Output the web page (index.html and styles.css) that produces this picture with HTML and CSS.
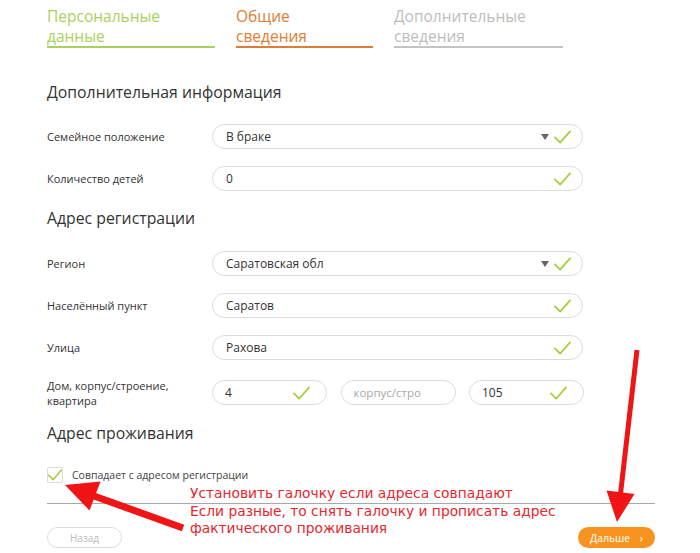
FILE: index.html
```html
<!DOCTYPE html>
<html lang="ru">
<head>
<meta charset="utf-8">
<link rel="stylesheet" href="styles.css">
</head>
<body>
<div class="page">
  <nav class="steps">
    <div class="step done">Персональные<br>данные</div>
    <div class="step current">Общие<br>сведения</div>
    <div class="step todo">Дополнительные<br>сведения</div>
  </nav>

  <main class="form">
    <h2 class="section-title first">Дополнительная информация</h2>
    <div class="row">
      <span class="label">Семейное положение</span>
      <div class="field"><span class="value">В браке</span><span class="caret"></span><svg class="check" viewBox="0 0 18 14"><path d="M1 7.5 L6.5 13 L17 1"/></svg></div>
    </div>
    <div class="row">
      <span class="label">Количество детей</span>
      <div class="field"><span class="value">0</span><svg class="check" viewBox="0 0 18 14"><path d="M1 7.5 L6.5 13 L17 1"/></svg></div>
    </div>

    <h2 class="section-title">Адрес регистрации</h2>
    <div class="row">
      <span class="label">Регион</span>
      <div class="field"><span class="value">Саратовская обл</span><span class="caret"></span><svg class="check" viewBox="0 0 18 14"><path d="M1 7.5 L6.5 13 L17 1"/></svg></div>
    </div>
    <div class="row">
      <span class="label">Населённый пункт</span>
      <div class="field"><span class="value">Саратов</span><svg class="check" viewBox="0 0 18 14"><path d="M1 7.5 L6.5 13 L17 1"/></svg></div>
    </div>
    <div class="row">
      <span class="label">Улица</span>
      <div class="field"><span class="value">Рахова</span><svg class="check" viewBox="0 0 18 14"><path d="M1 7.5 L6.5 13 L17 1"/></svg></div>
    </div>
    <div class="row house">
      <span class="label two">Дом, корпус/строение,<br>квартира</span>
      <div class="split">
        <div class="field small"><span class="value">4</span><svg class="check" viewBox="0 0 18 14"><path d="M1 7.5 L6.5 13 L17 1"/></svg></div>
        <div class="field small placeholder"><span class="value">корпус/строение</span></div>
        <div class="field small"><span class="value">105</span><svg class="check" viewBox="0 0 18 14"><path d="M1 7.5 L6.5 13 L17 1"/></svg></div>
      </div>
    </div>

    <h2 class="section-title last">Адрес проживания</h2>
    <label class="checkbox">
      <span class="box"><svg class="check" viewBox="0 0 18 14"><path d="M1 7.5 L6.5 13 L17 1"/></svg></span>
      <span class="cb-text">Совпадает с адресом регистрации</span>
    </label>

    <div class="divider"></div>

    <div class="actions">
      <button class="btn back">Назад</button>
      <button class="btn next">Дальше <span class="arr">›</span></button>
    </div>
  </main>

  <div class="note">Установить галочку если адреса совпадают<br>Если разные, то снять галочку и прописать адрес<br>фактического проживания</div>

  <svg class="arrows" viewBox="0 0 700 553" width="700" height="553">
    <line x1="183" y1="528" x2="94" y2="496" stroke="#f01414" stroke-width="7"/>
    <polygon points="65,485 100.5,481.5 89.5,510.5" fill="#f01414"/>
    <line x1="637" y1="350" x2="620.5" y2="494" stroke="#f01414" stroke-width="5"/>
    <polygon points="617,522 634.5,494 606.5,490.5" fill="#f01414"/>
  </svg>
</div>
</body>
</html>
```

FILE: styles.css
```css
* { box-sizing: border-box; }
html, body { margin: 0; padding: 0; background: #fff; }
body { font-family: "Open Sans", "Noto Sans", sans-serif; color: #333; }

.page {
  position: relative;
  width: 700px;
  height: 553px;
  overflow: hidden;
  padding-left: 47px;
}

.steps {
  display: flex;
  gap: 21px;
  padding-top: 6px;
}
.step {
  font-size: 15.5px;
  line-height: 20px;
  border-bottom: 2px solid;
  font-family: "Open Sans", sans-serif;
}
.step.done { width: 168px; color: #a9d15b; border-color: #a9d15b; }
.step.current { width: 137px; color: #e07c33; border-color: #e07c33; }
.step.todo { width: 169px; color: #bdbdbd; border-color: #c4c4c4; }

.form {
  width: 608px;
  padding-top: 17px;
}

.section-title {
  font-family: "Open Sans", sans-serif;
  font-weight: 400;
  font-size: 15.8px;
  line-height: 24px;
  color: #333;
  margin: 15px 0 21px;
}
.section-title.first { margin-bottom: 20px; }
.section-title.last { margin-top: 16px; margin-bottom: 21px; }

.row {
  display: flex;
  align-items: center;
  height: 25px;
  margin-bottom: 17px;
}
.row.house { margin-top: 20px; margin-bottom: 0; }
.row:has(+ .section-title) { margin-bottom: 0; }

.label {
  flex: none;
  width: 165px;
  font-size: 11px;
  color: #333;
  font-family: "Open Sans", sans-serif;
}
.label.two { line-height: 15px; }

.field {
  width: 371px;
  height: 25px;
  border: 1px solid #dcdcdc;
  border-radius: 13px;
  display: flex;
  align-items: center;
  padding: 0 11px 0 13px;
  background: #fff;
}
.value {
  flex: 1;
  font-family: "Open Sans", sans-serif;
  font-size: 12px;
  color: #333;
  white-space: nowrap;
  overflow: hidden;
}
.caret {
  width: 0; height: 0;
  border-left: 4.5px solid transparent;
  border-right: 4.5px solid transparent;
  border-top: 6px solid #666;
  margin-right: 5px;
}
.check {
  width: 17px;
  height: 14px;
  flex: none;
}
.check path {
  fill: none;
  stroke: #a6ce39;
  stroke-width: 1.8;
  stroke-linecap: round;
  stroke-linejoin: round;
}

.split { display: flex; gap: 13.5px; }
.field.small { width: 115px; padding: 0 16px 0 12px; }
.field.placeholder { padding-right: 34px; }
.field.placeholder .value { color: #a8a8a8; font-size: 11.5px; }

.checkbox {
  display: flex;
  align-items: center;
  gap: 9px;
  height: 17px;
}
.box {
  width: 16px; height: 16px;
  border: 1px solid #ddd;
  border-radius: 2px;
  display: flex;
  align-items: center;
  justify-content: center;
}
.box .check { width: 14px; height: 12px; }
.box .check path { stroke-width: 2; }
.cb-text {
  font-family: "Open Sans", sans-serif;
  font-size: 10.5px;
  color: #444;
}

.divider {
  margin-top: 20px;
  height: 0;
  border-top: 1.5px solid #a8a8a8;
}

.actions {
  display: flex;
  justify-content: space-between;
  margin-top: 23px;
}
.btn {
  height: 21px;
  border-radius: 11px;
  font-family: "Open Sans", sans-serif;
  font-size: 10px;
  padding: 0;
  cursor: pointer;
}
.btn.back {
  width: 75px;
  border: 1px solid #ddd;
  background: #fff;
  color: #bbb;
}
.btn.next {
  width: 77px;
  border: none;
  background: #f7931e;
  color: #fdf0dc;
  font-weight: 600;
}
.btn.next .arr { margin-left: 7px; }

.note {
  position: absolute;
  left: 190px;
  top: 485px;
  font-family: "DejaVu Sans", Verdana, sans-serif;
  font-size: 13.8px;
  line-height: 17.5px;
  color: #e8262c;
}

.arrows {
  position: absolute;
  left: 0;
  top: 0;
  pointer-events: none;
}
```
